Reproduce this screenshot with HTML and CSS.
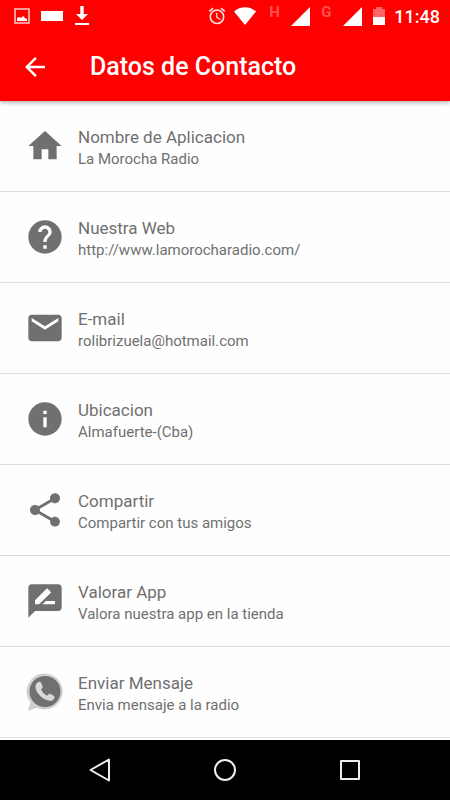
FILE: index.html
```
<!DOCTYPE html>
<html lang="es">
<head>
    <meta charset="UTF-8">
    <meta name="viewport" content="width=device-width, initial-scale=1.0">
    <title>Datos de Contacto</title>
    <link rel="stylesheet" href="styles.css">
</head>
<body>

    <header class="header">
        <div class="status-bar">
            <div class="status-left">
                <svg width="16" height="16" viewBox="0 0 16 16">
                    <rect x="1" y="1" width="14" height="14" fill="none" stroke="#fff" stroke-width="1.4" opacity=".85"/>
                    <path d="M3 13V10l2-1 2 1 2-2 2 2 2 1v2z" fill="#fff"/>
                </svg>
                <svg width="22" height="10" viewBox="0 0 22 10"><rect width="22" height="10" fill="#fff"/></svg>
                <svg width="16" height="20" viewBox="0 0 16 20">
                    <path d="M6.300 0h3.400v8H14l-6 6-6-6h4.300z M1 17h14v2H1z" fill="#fff"/>
                </svg>
            </div>
            <div class="status-right">
                <svg class="alarm" width="20" height="20" viewBox="0 0 24 24">
                    <path d="M22 5.720l-4.600-3.860-1.290 1.530 4.600 3.860L22 5.720zM7.880 3.390L6.600 1.860 2 5.710l1.290 1.530 4.590-3.850zM12.500 8H11v6l4.750 2.850.75-1.230-4-2.370V8zM12 4c-4.970 0-9 4.030-9 9s4.020 9 9 9a9 9 0 0 0 0-18zm0 16c-3.870 0-7-3.130-7-7s3.130-7 7-7 7 3.130 7 7-3.130 7-7 7z"/>
                </svg>
                <svg class="wifi" width="22" height="18" viewBox="0 0 22 18">
                    <path d="M0 4.500C6-1.300 16-1.300 22 4.500L11 18z"/>
                </svg>
                <span class="network">H</span>
                <svg class="signal" width="19" height="19" viewBox="0 0 19 19"><path d="M19 0v19H0z"/></svg>
                <span class="network">G</span>
                <svg class="signal" width="19" height="19" viewBox="0 0 19 19"><path d="M19 0v19H0z"/></svg>
                <svg class="battery" width="12" height="18" viewBox="0 0 12 18">
                    <path d="M3 0h6v2h3v8H0V2h3z" opacity=".4"/>
                    <path d="M0 10h12v8H0z"/>
                </svg>
                <span class="clock">11:48</span>
            </div>
        </div>
        <div class="app-bar">
            <button class="back" type="button" aria-label="Volver">
                <svg width="30" height="30" viewBox="0 0 24 24">
                    <path d="M20 11H7.830l5.590-5.590L12 4l-8 8 8 8 1.410-1.410L7.830 13H20v-2z" fill="#fff"/>
                </svg>
            </button>
            <h1>Datos de Contacto</h1>
        </div>
    </header>

    <main>
        <ul class="contact-list">
            <li>
                <a href="#nombre">
                    <svg class="icon" viewBox="0 0 24 24"><path d="M10 20v-6h4v6h5v-8h3L12 3 2 12h3v8z"/></svg>
                    <span class="text">
                        <span class="label">Nombre de Aplicacion</span>
                        <span class="detail">La Morocha Radio</span>
                    </span>
                </a>
            </li>
            <li>
                <a href="http://www.lamorocharadio.com/">
                    <svg class="icon" viewBox="0 0 24 24"><path d="M12 2C6.480 2 2 6.480 2 12s4.480 10 10 10 10-4.480 10-10S17.520 2 12 2zm1 17h-2v-2h2v2zm2.070-7.750l-.9.920C13.450 12.900 13 13.500 13 15h-2v-.5c0-1.100.45-2.100 1.170-2.830l1.240-1.260c.37-.36.590-.86.590-1.410 0-1.100-.9-2-2-2s-2 .9-2 2H8c0-2.210 1.790-4 4-4s4 1.790 4 4c0 .88-.36 1.680-.93 2.250z"/></svg>
                    <span class="text">
                        <span class="label">Nuestra Web</span>
                        <span class="detail">http://www.lamorocharadio.com/</span>
                    </span>
                </a>
            </li>
            <li>
                <a href="mailto:rolibrizuela@hotmail.com">
                    <svg class="icon" viewBox="0 0 24 24"><path d="M20 4H4c-1.100 0-1.990.9-1.990 2L2 18c0 1.100.9 2 2 2h16c1.100 0 2-.9 2-2V6c0-1.100-.9-2-2-2zm0 4l-8 5-8-5V6l8 5 8-5v2z"/></svg>
                    <span class="text">
                        <span class="label">E-mail</span>
                        <span class="detail">rolibrizuela@hotmail.com</span>
                    </span>
                </a>
            </li>
            <li>
                <a href="#ubicacion">
                    <svg class="icon" viewBox="0 0 24 24"><path d="M12 2C6.480 2 2 6.480 2 12s4.480 10 10 10 10-4.480 10-10S17.520 2 12 2zm1 15h-2v-6h2v6zm0-8h-2V7h2v2z"/></svg>
                    <span class="text">
                        <span class="label">Ubicacion</span>
                        <span class="detail">Almafuerte-(Cba)</span>
                    </span>
                </a>
            </li>
            <li>
                <a href="#compartir">
                    <svg class="icon" viewBox="0 0 24 24"><path d="M18 16.080c-.76 0-1.440.3-1.960.77L8.910 12.700c.05-.23.09-.46.09-.7s-.04-.47-.09-.7l7.050-4.110c.54.5 1.250.81 2.040.81 1.660 0 3-1.340 3-3s-1.340-3-3-3-3 1.340-3 3c0 .24.04.47.09.7L8.040 9.810C7.500 9.310 6.790 9 6 9c-1.660 0-3 1.340-3 3s1.340 3 3 3c.79 0 1.500-.31 2.040-.81l7.120 4.160c-.05.21-.08.43-.08.65 0 1.610 1.310 2.920 2.920 2.920s2.920-1.310 2.920-2.920-1.310-2.920-2.920-2.920z"/></svg>
                    <span class="text">
                        <span class="label">Compartir</span>
                        <span class="detail">Compartir con tus amigos</span>
                    </span>
                </a>
            </li>
            <li>
                <a href="#valorar">
                    <svg class="icon" viewBox="0 0 24 24"><path d="M20 2H4c-1.100 0-1.990.9-1.990 2L2 22l4-4h14c1.100 0 2-.9 2-2V4c0-1.100-.9-2-2-2zM6 14v-2.470l6.880-6.880c.2-.2.510-.2.710 0l1.770 1.770c.2.200.2.510 0 .71L8.470 14H6zm12 0h-7.500l2-2H18v2z"/></svg>
                    <span class="text">
                        <span class="label">Valorar App</span>
                        <span class="detail">Valora nuestra app en la tienda</span>
                    </span>
                </a>
            </li>
            <li>
                <a href="#mensaje">
                    <svg class="icon" viewBox="0 0 40 40">
                        <path class="bubble" d="M20 1.500a18 18 0 1 1-8.200 34.200L2.800 39l2.500-8.800A18 18 0 0 1 20 1.500z"/>
                        <circle cx="20" cy="19.500" r="15.500"/>
                        <path class="phone" d="M12.500 10.500c1.500-1.300 3.200-1 3.800.6l1.300 3.400c.3 1-.2 1.600-1.500 3 1.400 3 3.300 4.900 6.300 6.300 1.500-1.900 2.100-2.300 3.100-1.800l3.300 1.700c1.100.6.900 2.300-.1 3.500-1.500 1.800-4.400 2-7.500.6-5-2.100-8.700-6-10.300-10.300-.9-2.800-.4-5.300 1.600-7z"/>
                    </svg>
                    <span class="text">
                        <span class="label">Enviar Mensaje</span>
                        <span class="detail">Envia mensaje a la radio</span>
                    </span>
                </a>
            </li>
        </ul>
    </main>

    <nav class="nav-bar">
        <button type="button" aria-label="Atras">
            <svg width="26" height="26" viewBox="0 0 26 26"><path d="M22 2.500v21L3.500 13z"/></svg>
        </button>
        <button type="button" aria-label="Inicio">
            <svg width="26" height="26" viewBox="0 0 26 26"><circle cx="13" cy="13" r="10"/></svg>
        </button>
        <button type="button" aria-label="Recientes">
            <svg width="26" height="26" viewBox="0 0 26 26"><rect x="4" y="4" width="18" height="18"/></svg>
        </button>
    </nav>

</body>
</html>
```
FILE: styles.css
```
* {
    box-sizing: border-box;
}

body {
    margin: 0;
    min-height: 100vh;
    display: flex;
    flex-direction: column;
    background-color: #fefefe;
    font-family: Roboto, 'Liberation Sans', sans-serif;
    color: #707070;
}

svg {
    display: block;
    flex-shrink: 0;
}

button {
    border: 0;
    padding: 0;
    background: none;
    cursor: pointer;
}

/* Header */
.header {
    background-color: #fe0000;
    color: #fff;
    box-shadow: 0 1px 5px rgba(0, 0, 0, 0.4);
    z-index: 1;
}

.status-bar {
    height: 32px;
    padding: 0 10px 0 14px;
    display: flex;
    align-items: center;
    justify-content: space-between;
}

.status-left,
.status-right {
    display: flex;
    align-items: center;
}

.status-left {
    gap: 11px;
}

.status-right svg {
    fill: #fff;
}

.alarm {
    opacity: 0.85;
}

.wifi {
    margin: 0 13px 0 7px;
}

.network {
    width: 12px;
    margin: 0 10px 8px 0;
    font-size: 15px;
    line-height: 16px;
    font-weight: 700;
    opacity: 0.3;
}

.signal {
    margin-right: 11px;
}

.battery {
    margin-right: 9px;
}

.clock {
    font-size: 18px;
    font-weight: 500;
}

.app-bar {
    height: 69px;
    padding: 0 20px;
    display: flex;
    align-items: center;
    gap: 40px;
}

.app-bar h1 {
    margin: 0;
    font-size: 25px;
    font-weight: 500;
}

/* Contact list */
main {
    flex: 1;
}

.contact-list {
    margin: 0;
    padding: 0;
    list-style: none;
}

.contact-list a {
    height: 91px;
    padding: 0 25px;
    display: flex;
    align-items: center;
    gap: 13px;
    border-bottom: 1px solid #dedede;
    color: inherit;
    text-decoration: none;
}

.icon {
    width: 40px;
    height: 40px;
    fill: #707070;
}

.icon .bubble {
    fill: #cfcfcf;
}

.icon .phone {
    fill: #d8d8d8;
}

.text {
    padding-top: 4px;
}

.label,
.detail {
    display: block;
    line-height: 22px;
}

.label {
    font-size: 17px;
}

.detail {
    font-size: 15px;
}

/* Bottom navigation */
.nav-bar {
    height: 60px;
    padding: 0 37px;
    display: flex;
    background-color: #000;
}

.nav-bar button {
    flex: 1;
    display: flex;
    align-items: center;
    justify-content: center;
}

.nav-bar svg {
    fill: none;
    stroke: #eee;
    stroke-width: 2;
    stroke-linejoin: round;
}
```
